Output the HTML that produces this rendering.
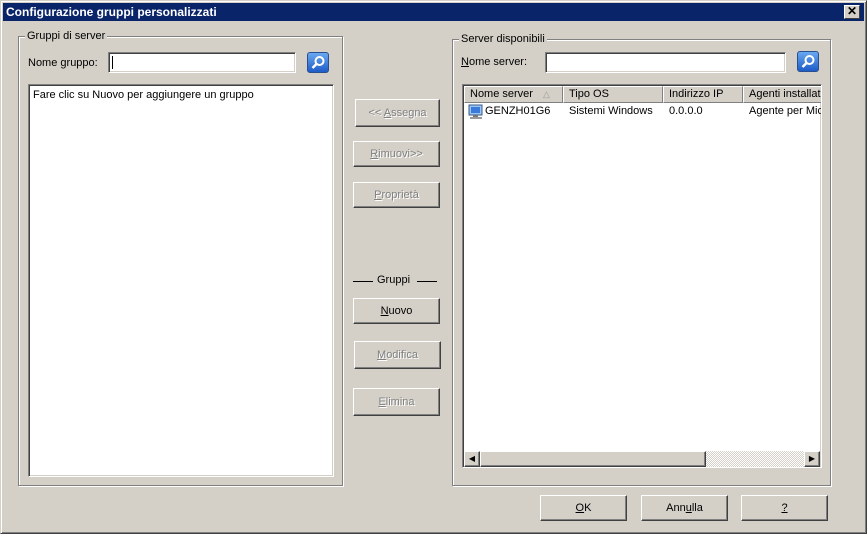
<!DOCTYPE html>
<html><head><meta charset="utf-8"><style>
*{box-sizing:border-box;margin:0;padding:0}
body{width:867px;height:534px;overflow:hidden;background:#d4d0c8;font-family:"Liberation Sans",sans-serif;font-size:11px;color:#000;position:relative}
.a{position:absolute}
.win{left:0;top:0;width:867px;height:534px;border:1px solid;border-color:#d4d0c8 #404040 #404040 #d4d0c8;box-shadow:inset 1px 1px 0 #fff,inset -1px -1px 0 #808080}
.title{left:3px;top:3px;width:861px;height:18px;background:#0a246a;color:#fff;font-weight:bold;font-size:12px;line-height:18px;padding-left:3px}
.close{left:844px;top:5px;width:16px;height:14px;background:#d4d0c8;border:1px solid;border-color:#fff #404040 #404040 #fff;font-size:12px;line-height:11px;text-align:center;font-weight:bold;color:#000}
.grp{border:1px solid #808080;box-shadow:1px 1px 0 #fff,inset 1px 1px 0 #fff}
.lbl{background:#d4d0c8;padding:0 2px}
.sunk{background:#fff;border:1px solid;border-color:#808080 #fff #fff #808080;box-shadow:inset 1px 1px 0 #404040,inset -1px -1px 0 #d4d0c8}
.btn{border:1px solid;border-color:#fff #404040 #404040 #fff;box-shadow:inset -1px -1px 0 #808080;text-align:center;background:#d4d0c8}
.dis{color:#808080;text-shadow:1px 1px 0 #fff}
.srch{width:22px;height:21px;border-radius:3px;background:linear-gradient(#6aa8f0,#1e5cc8);border:1px solid #2a4f90}
.hd{top:1px;height:17px;border:1px solid;border-color:#fff #808080 #808080 #fff;background:#d4d0c8;padding-left:5px;line-height:15px}
u{text-decoration:underline}
</style></head><body>
<div class="a win"></div>
<div class="a title">Configurazione gruppi personalizzati</div>
<div class="a close">✕</div>

<div class="a grp" style="left:18px;top:36px;width:325px;height:450px"></div>
<div class="a lbl" style="left:25px;top:30px">Gruppi di server</div>
<div class="a" style="left:28px;top:57px">Nome <u>g</u>ruppo:</div>
<div class="a sunk" style="left:108px;top:52px;width:188px;height:21px"><div class="a" style="left:3px;top:3px;width:1px;height:13px;background:#000"></div></div>
<div class="a srch" style="left:307px;top:52px"><svg width="20" height="19"><circle cx="11.5" cy="8" r="4" fill="none" stroke="#fff" stroke-width="2"/><path d="M8.5 11 L4.5 15" stroke="#fff" stroke-width="2.5"/></svg></div>
<div class="a sunk" style="left:28px;top:84px;width:306px;height:393px"><div class="a" style="left:4px;top:4px">Fare clic su Nuovo per aggiungere un gruppo</div></div>

<div class="a btn dis" style="left:355px;top:99px;width:85px;height:28px;line-height:26px">&lt;&lt; <u>A</u>ssegna</div>
<div class="a btn dis" style="left:353px;top:141px;width:87px;height:26px;line-height:24px"><u>R</u>imuovi&gt;&gt;</div>
<div class="a btn dis" style="left:353px;top:182px;width:87px;height:26px;line-height:24px"><u>P</u>roprietà</div>
<div class="a" style="left:377px;top:274px">Gruppi</div>
<div class="a" style="left:417px;top:281px;width:20px;height:1px;background:#000"></div>
<div class="a" style="left:353px;top:281px;width:20px;height:1px;background:#000"></div>
<div class="a btn" style="left:353px;top:298px;width:87px;height:26px;line-height:24px"><u>N</u>uovo</div>
<div class="a btn dis" style="left:354px;top:341px;width:87px;height:28px;line-height:26px"><u>M</u>odifica</div>
<div class="a btn dis" style="left:353px;top:388px;width:87px;height:28px;line-height:26px"><u>E</u>limina</div>

<div class="a grp" style="left:452px;top:39px;width:379px;height:447px"></div>
<div class="a lbl" style="left:459px;top:33px">Server disponibili</div>
<div class="a" style="left:461px;top:56px"><u>N</u>ome server:</div>
<div class="a sunk" style="left:545px;top:52px;width:241px;height:21px"></div>
<div class="a srch" style="left:797px;top:51px"><svg width="20" height="19"><circle cx="11.5" cy="8" r="4" fill="none" stroke="#fff" stroke-width="2"/><path d="M8.5 11 L4.5 15" stroke="#fff" stroke-width="2.5"/></svg></div>
<div class="a sunk" style="left:462px;top:84px;width:360px;height:384px;overflow:hidden">
 <div class="a hd" style="left:1px;width:99px">Nome server<span style="position:absolute;left:78px;color:#999;font-size:9px">△</span></div>
 <div class="a hd" style="left:100px;width:100px">Tipo OS</div>
 <div class="a hd" style="left:200px;width:80px">Indirizzo IP</div>
 <div class="a hd" style="left:280px;width:90px;white-space:nowrap">Agenti installati</div>
 <svg class="a" style="left:5px;top:19px" width="16" height="16"><rect x="1" y="1" width="13" height="10" fill="#9cc4f0" stroke="#3a5a8a"/><rect x="3" y="3" width="9" height="6" fill="#3a7ad8"/><rect x="5" y="11" width="5" height="2" fill="#777"/><rect x="2" y="13" width="12" height="2" fill="#999"/></svg>
 <div class="a" style="left:22px;top:20px">GENZH01G6</div>
 <div class="a" style="left:106px;top:20px">Sistemi Windows</div>
 <div class="a" style="left:206px;top:20px">0.0.0.0</div>
 <div class="a" style="left:286px;top:20px;white-space:nowrap">Agente per Mic</div>
 <div class="a" style="left:1px;top:366px;width:356px;height:16px;background:repeating-conic-gradient(#fff 0 25%,#d4d0c8 0 50%) 0 0/2px 2px"></div>
 <div class="a btn" style="left:1px;top:366px;width:16px;height:16px;font-size:8px;line-height:14px">◀</div>
 <div class="a btn" style="left:17px;top:366px;width:226px;height:16px"></div>
 <div class="a btn" style="left:341px;top:366px;width:16px;height:16px;font-size:8px;line-height:14px">▶</div>
</div>

<div class="a btn" style="left:540px;top:495px;width:87px;height:26px;line-height:24px"><u>O</u>K</div>
<div class="a btn" style="left:641px;top:495px;width:87px;height:26px;line-height:24px">Ann<u>u</u>lla</div>
<div class="a btn" style="left:741px;top:495px;width:87px;height:26px;line-height:24px"><u>?</u></div>
</body></html>
